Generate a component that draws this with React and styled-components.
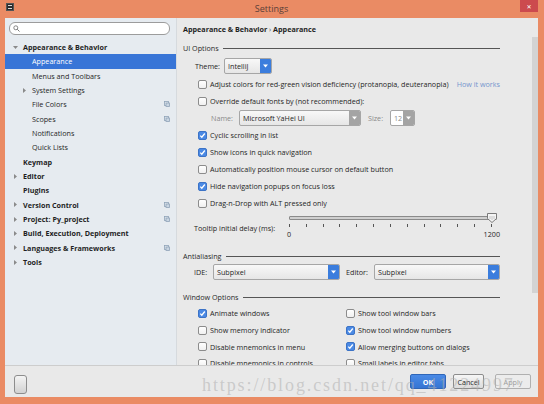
import React from 'react'
import styled, { createGlobalStyle } from 'styled-components'

const GlobalStyle = createGlobalStyle`
	body {
		margin: 0;
		font-family: "Open Sans", "Noto Sans", sans-serif;
	}
`

const tree = [
	{ label: 'Appearance & Behavior', level: 0, arrow: 'down' },
	{ label: 'Appearance', level: 1, selected: true },
	{ label: 'Menus and Toolbars', level: 1 },
	{ label: 'System Settings', level: 1, arrow: 'right' },
	{ label: 'File Colors', level: 1, icon: true },
	{ label: 'Scopes', level: 1, icon: true },
	{ label: 'Notifications', level: 1 },
	{ label: 'Quick Lists', level: 1 },
	{ label: 'Keymap', level: 0 },
	{ label: 'Editor', level: 0, arrow: 'right' },
	{ label: 'Plugins', level: 0 },
	{ label: 'Version Control', level: 0, arrow: 'right', icon: true },
	{ label: 'Project: Py_project', level: 0, arrow: 'right', icon: true },
	{ label: 'Build, Execution, Deployment', level: 0, arrow: 'right' },
	{ label: 'Languages & Frameworks', level: 0, arrow: 'right', icon: true },
	{ label: 'Tools', level: 0, arrow: 'right' }
]

const uiChecks = [
	{ label: 'Cyclic scrolling in list', checked: true },
	{ label: 'Show icons in quick navigation', checked: true },
	{ label: 'Automatically position mouse cursor on default button', checked: false },
	{ label: 'Hide navigation popups on focus loss', checked: true },
	{ label: 'Drag-n-Drop with ALT pressed only', checked: false }
]

const windowChecks = [
	{ label: 'Animate windows', checked: true },
	{ label: 'Show tool window bars', checked: false },
	{ label: 'Show memory indicator', checked: false },
	{ label: 'Show tool window numbers', checked: true },
	{ label: 'Disable mnemonics in menu', checked: false },
	{ label: 'Allow merging buttons on dialogs', checked: true },
	{ label: 'Disable mnemonics in controls', checked: false },
	{ label: 'Small labels in editor tabs', checked: false }
]

const Arrow = ({ dir }) => (
	<svg width='5' height='5' viewBox='0 0 5 5'>
		{dir === 'down'
			? <polygon points='0,1 5,1 2.5,4' fill='#8a8a8a' />
			: <polygon points='1,0 4,2.5 1,5' fill='#8a8a8a' />}
	</svg>
)

const CopyIcon = () => (
	<svg width='6' height='6' viewBox='0 0 6 6'>
		<rect x='0.5' y='0.5' width='4' height='4' fill='#dfe6ee' stroke='#8fa3b8' strokeWidth='0.8' />
		<rect x='2' y='2' width='3.5' height='3.5' fill='#c9d5e2' stroke='#8fa3b8' strokeWidth='0.8' />
	</svg>
)

const DownTri = ({ color = '#fff' }) => (
	<svg width='5' height='4' viewBox='0 0 5 4'>
		<polygon points='0,0.5 5,0.5 2.5,3.5' fill={color} />
	</svg>
)

const Check = ({ checked }) => (
	<CheckBox checked={checked}>
		{checked && (
			<svg width='7' height='7' viewBox='0 0 7 7'>
				<polyline points='1.3,3.6 2.8,5.2 5.8,1.5' fill='none' stroke='#fff' strokeWidth='1.3' />
			</svg>
		)}
	</CheckBox>
)

const Combo = ({ value, width, tone = 'blue', disabled }) => (
	<ComboBox style={{ width }} disabled={disabled}>
		<ComboValue disabled={disabled}>{value}</ComboValue>
		<ComboButton tone={tone}>
			<DownTri />
		</ComboButton>
	</ComboBox>
)

const App = () => {
	return (
		<>
			<GlobalStyle />
			<Window>
				<TitleBar>
					<AppIcon>
						<span />
						<span />
					</AppIcon>
					<Title>Settings</Title>
					<CloseButton>✕</CloseButton>
				</TitleBar>
				<Body>
					<Main>
						<Sidebar>
							<Search>
								<svg width='7' height='7' viewBox='0 0 7 7'>
									<circle cx='2.8' cy='2.8' r='2' fill='none' stroke='#777' strokeWidth='0.9' />
									<line x1='4.3' y1='4.3' x2='6.5' y2='6.5' stroke='#777' strokeWidth='1' />
								</svg>
							</Search>
							<Tree>
								{tree.map(({ label, level, arrow, icon, selected }) => (
									<TreeRow key={label} level={level} selected={selected}>
										<ArrowSlot>{arrow && <Arrow dir={arrow} />}</ArrowSlot>
										<TreeLabel bold={level === 0}>{label}</TreeLabel>
										{icon && <CopyIcon />}
									</TreeRow>
								))}
							</Tree>
						</Sidebar>
						<Panel>
							<Content>
								<Breadcrumb>Appearance &amp; Behavior <Sep>›</Sep> Appearance</Breadcrumb>

								<Header>UI Options</Header>
								<FieldRow indent={12} height={19.5}>
									<FieldLabel width={29}>Theme:</FieldLabel>
									<Combo value='IntelliJ' width={48} />
								</FieldRow>
								<CheckRow>
									<Check />
									<span>Adjust colors for red-green vision deficiency (protanopia, deuteranopia)</span>
									<Link>How it works</Link>
								</CheckRow>
								<CheckRow>
									<Check />
									<span>Override default fonts by (not recommended):</span>
								</CheckRow>
								<FieldRow indent={28} height={17}>
									<FieldLabel width={28} muted>Name:</FieldLabel>
									<Combo value='Microsoft YaHei UI' width={122} tone='gray' />
									<FieldLabel width={22} muted gap={7}>Size:</FieldLabel>
									<Combo value='12' width={25} tone='gray' disabled />
								</FieldRow>
								{uiChecks.map(({ label, checked }) => (
									<CheckRow key={label}>
										<Check checked={checked} />
										<span>{label}</span>
									</CheckRow>
								))}

								<SliderBlock>
									<SliderLabel>Tooltip initial delay (ms):</SliderLabel>
									<Slider>
										<Track>
											<Thumb>
												<svg width='10' height='10' viewBox='0 0 10 10'>
													<polygon points='0.5,0.5 9.5,0.5 9.5,5.5 5,9.5 0.5,5.5' fill='#f4f4f4' stroke='#6d6d6d' strokeWidth='0.9' />
													<line x1='3' y1='3' x2='3' y2='6' stroke='#aaa' strokeWidth='0.6' />
													<line x1='5' y1='3' x2='5' y2='7' stroke='#aaa' strokeWidth='0.6' />
													<line x1='7' y1='3' x2='7' y2='6' stroke='#aaa' strokeWidth='0.6' />
												</svg>
											</Thumb>
										</Track>
										<Ticks>
											{Array.from({ length: 13 }).map((_, i) => <Tick key={i} />)}
										</Ticks>
										<TickLabels>
											<span>0</span>
											<span>1200</span>
										</TickLabels>
									</Slider>
								</SliderBlock>

								<Header height={14}>Antialiasing</Header>
								<FieldRow indent={11} height={18}>
									<FieldLabel width={19}>IDE:</FieldLabel>
									<Combo value='Subpixel' width={127} />
									<FieldLabel width={28} gap={6}>Editor:</FieldLabel>
									<Combo value='Subpixel' width={126} />
								</FieldRow>

								<Header top={8}>Window Options</Header>
								<CheckGrid>
									{windowChecks.map(({ label, checked }) => (
										<GridCheck key={label}>
											<Check checked={checked} />
											<span>{label}</span>
										</GridCheck>
									))}
								</CheckGrid>
							</Content>
							<ScrollTrack>
								<ScrollThumb />
							</ScrollTrack>
						</Panel>
					</Main>
					<Footer>
						<HelpButton />
						<Buttons>
							<Button kind='primary' width={36}>OK</Button>
							<Button width={31}>Cancel</Button>
							<Button kind='disabled' width={36} gap={11}>Apply</Button>
						</Buttons>
						<Watermark>https://blog.csdn.net/qq_41224997</Watermark>
					</Footer>
				</Body>
			</Window>
		</>
	)
}

export default App

const Window = styled.div`
	box-sizing: border-box;
	display: flex;
	flex-direction: column;
	width: 544px;
	height: 404px;
	padding: 0 6px 7px 5px;
	background: #ea8b64;
	font-size: 7.2px;
	color: #1f1f1f;
`

const TitleBar = styled.div`
	display: grid;
	grid-template-columns: 18px 1fr 18px;
	align-items: center;
	height: 18px;
`

const AppIcon = styled.div`
	display: flex;
	flex-direction: column;
	justify-content: center;
	gap: 2px;
	width: 8px;
	height: 8px;
	margin: 0 0 4px 1px;
	padding: 0 1px;
	box-sizing: border-box;
	background: #2c2c2c;
	border: 1px solid #555;

	span {
		display: block;
		height: 1px;
		background: #d8d8d8;
	}
`

const Title = styled.div`
	text-align: center;
	font-size: 9px;
	color: #5a4038;
	margin-top: -1px;
`

const CloseButton = styled.div`
	align-self: start;
	display: flex;
	align-items: center;
	justify-content: center;
	height: 12px;
	background: #cc4a4e;
	color: #fff;
	font-size: 6px;
	font-family: "DejaVu Sans", sans-serif;
`

const Body = styled.div`
	flex: 1;
	display: flex;
	flex-direction: column;
	min-height: 0;
	background: #e9e9e9;
`

const Main = styled.div`
	flex: 1;
	display: flex;
	min-height: 0;
`

const Sidebar = styled.div`
	box-sizing: border-box;
	width: 172px;
	padding-top: 4px;
	background: #e6ebf0;
	border-right: 1px solid #d6dade;
`

const Search = styled.div`
	box-sizing: border-box;
	display: flex;
	align-items: center;
	height: 13px;
	margin: 0 6px 5px 4px;
	padding-left: 3px;
	background: #fff;
	border: 1px solid #9c9c9c;
	border-radius: 6px;
`

const Tree = styled.div`
	display: flex;
	flex-direction: column;
`

const TreeRow = styled.div`
	display: flex;
	align-items: center;
	height: 14.33px;
	padding: 0 6px 0 ${props => 8 + props.level * 9}px;
	background: ${props => (props.selected ? '#3875d7' : 'transparent')};
	color: ${props => (props.selected ? '#fff' : '#1f1f1f')};
`

const ArrowSlot = styled.span`
	display: flex;
	align-items: center;
	width: 10px;
`

const TreeLabel = styled.span`
	flex: 1;
	font-weight: ${props => (props.bold ? 700 : 400)};
`

const Panel = styled.div`
	flex: 1;
	display: flex;
	min-width: 0;
`

const Content = styled.div`
	flex: 1;
	display: flex;
	flex-direction: column;
	min-width: 0;
	overflow: hidden;
	padding: 0 32px 0 6px;
`

const Breadcrumb = styled.div`
	display: flex;
	align-items: center;
	flex-shrink: 0;
	height: 22px;
	font-weight: 700;
	white-space: pre;
`

const Sep = styled.span`
	font-weight: 400;
	color: #555;
`

const Header = styled.div`
	display: flex;
	align-items: center;
	flex-shrink: 0;
	height: ${props => props.height || 16}px;
	margin-top: ${props => props.top || 0}px;
	color: #2a2a2a;

	&::after {
		content: '';
		flex: 1;
		height: 1px;
		margin-left: 4px;
		background: #555;
	}
`

const FieldRow = styled.div`
	display: flex;
	align-items: center;
	flex-shrink: 0;
	height: ${props => props.height}px;
	padding-left: ${props => props.indent}px;
`

const FieldLabel = styled.span`
	flex-shrink: 0;
	width: ${props => props.width}px;
	margin-left: ${props => props.gap || 0}px;
	color: ${props => (props.muted ? '#8a8a8a' : '#1f1f1f')};
`

const ComboBox = styled.div`
	box-sizing: border-box;
	display: flex;
	height: 16px;
	border: 1px solid #a6a6a6;
	border-radius: 2px;
	background: ${props => (props.disabled ? '#fff' : 'linear-gradient(#f8f8f8, #e6e6e6)')};
	overflow: hidden;
`

const ComboValue = styled.span`
	flex: 1;
	display: flex;
	align-items: center;
	padding-left: 3px;
	white-space: nowrap;
	color: ${props => (props.disabled ? '#8a8a8a' : '#1f1f1f')};
`

const ComboButton = styled.span`
	display: flex;
	align-items: center;
	justify-content: center;
	width: 11px;
	background: ${props => (props.tone === 'gray' ? '#a4a4a4' : '#3b7ddd')};
`

const CheckRow = styled.div`
	display: flex;
	align-items: center;
	gap: 3px;
	flex-shrink: 0;
	height: 17px;
	padding-left: 15px;
	white-space: nowrap;
`

const CheckBox = styled.span`
	box-sizing: border-box;
	display: flex;
	align-items: center;
	justify-content: center;
	flex-shrink: 0;
	width: 9px;
	height: 9px;
	border: 1px solid ${props => (props.checked ? '#3c73c6' : '#8c8c8c')};
	border-radius: 2px;
	background: ${props => (props.checked ? '#4a89e4' : 'linear-gradient(#fff, #f0f0f0)')};
`

const Link = styled.span`
	margin-left: auto;
	color: #7595cd;
`

const SliderBlock = styled.div`
	display: grid;
	grid-template-columns: 95px 1fr;
	flex-shrink: 0;
	height: 37.5px;
	padding-left: 11px;
`

const SliderLabel = styled.span`
	padding-top: 11px;
`

const Slider = styled.div`
	display: flex;
	flex-direction: column;
	padding-top: 4.5px;
`

const Track = styled.div`
	position: relative;
	box-sizing: border-box;
	width: 208px;
	height: 4px;
	background: #cfcfcf;
	border: 1px solid #8a8a8a;
	border-radius: 1px;
`

const Thumb = styled.span`
	position: absolute;
	left: 197px;
	top: -4px;
	display: flex;
`

const Ticks = styled.div`
	display: flex;
	justify-content: space-between;
	width: 203px;
	margin-top: 4px;
`

const Tick = styled.span`
	width: 1px;
	height: 3px;
	background: #555;
`

const TickLabels = styled.div`
	display: flex;
	justify-content: space-between;
	width: 213px;
	margin: 2px 0 0 -2px;
`

const CheckGrid = styled.div`
	display: grid;
	grid-template-columns: 148px 1fr;
	grid-auto-rows: 16.7px;
	flex-shrink: 0;
	padding-left: 15px;
`

const GridCheck = styled.div`
	display: flex;
	align-items: center;
	gap: 3px;
	white-space: nowrap;
`

const ScrollTrack = styled.div`
	width: 6px;
	padding-top: 19px;
`

const ScrollThumb = styled.div`
	height: 256px;
	background: #d3d3d3;
`

const Footer = styled.div`
	position: relative;
	box-sizing: border-box;
	display: flex;
	align-items: center;
	height: 32px;
	padding: 0 7px 0 9px;
	border-top: 1px solid #cdcdcd;
	overflow: hidden;
`

const HelpButton = styled.div`
	box-sizing: border-box;
	width: 13px;
	height: 19px;
	margin-top: 5px;
	border: 1px solid #8d8d8d;
	border-radius: 3px;
	background: linear-gradient(#f4f4f4, #d2d2d2);
`

const Buttons = styled.div`
	display: flex;
	margin-left: auto;
	gap: 7px;
`

const Button = styled.div`
	box-sizing: border-box;
	display: flex;
	align-items: center;
	justify-content: center;
	width: ${props => props.width}px;
	height: 15px;
	margin-left: ${props => (props.gap ? props.gap - 7 : 0)}px;
	border-radius: 2px;
	font-weight: ${props => (props.kind === 'primary' ? 700 : 400)};
	border: 1px solid ${props => (props.kind === 'primary' ? '#2f66b8' : props.kind === 'disabled' ? '#b0b0b0' : '#8c8c8c')};
	background: ${props => (props.kind === 'primary' ? 'linear-gradient(#4a8ae6, #3575d3)' : props.kind === 'disabled' ? '#ececec' : 'linear-gradient(#f6f6f6, #dcdcdc)')};
	color: ${props => (props.kind === 'primary' ? '#fff' : props.kind === 'disabled' ? '#9c9c9c' : '#1f1f1f')};
`

const Watermark = styled.div`
	position: absolute;
	left: 197px;
	top: 10px;
	font-family: "Liberation Serif", serif;
	font-size: 18px;
	line-height: 1;
	letter-spacing: 1.9px;
	white-space: nowrap;
	color: rgba(175, 175, 175, 0.55);
	pointer-events: none;
`
